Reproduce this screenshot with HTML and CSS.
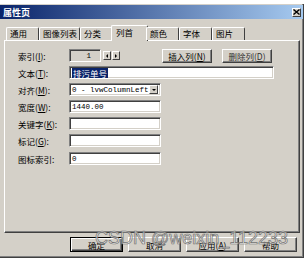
FILE: index.html
```html
<!DOCTYPE html>
<html lang="zh-CN">
<head>
	<meta charset="UTF-8">
	<title>属性页</title>
	<link rel="stylesheet" href="styles.css">
</head>
<body>
	<div class="win">
		<div class="caption">
			<span>属性页</span>
			<span class="close">
				<svg width="7" height="6" viewBox="0 0 7 6"><path d="M0.5 0.5l6 5M6.5 0.5l-6 5" stroke="#000" stroke-width="1.4"/></svg>
			</span>
		</div>
		<div class="tabs">
			<span class="tab">通用</span>
			<span class="tab">图像列表</span>
			<span class="tab">分类</span>
			<span class="tab on">列首</span>
			<span class="tab">颜色</span>
			<span class="tab">字体</span>
			<span class="tab">图片</span>
		</div>
		<div class="sheet">
			<div class="row">
				<span class="lbl">索引(<u>I</u>):</span>
				<span class="field field-idx">1</span>
				<span class="spin">
					<span class="spin-btn"><i class="arr-l"></i></span>
					<span class="spin-btn"><i class="arr-r"></i></span>
				</span>
				<span class="btn btn-insert">插入列(<u>N</u>)</span>
				<span class="btn btn-del">删除列(<u>D</u>)</span>
			</div>
			<div class="row">
				<span class="lbl">文本(<u>T</u>):</span>
				<span class="field field-wide"><span class="sel">排污单号</span></span>
			</div>
			<div class="row">
				<span class="lbl">对齐(<u>M</u>):</span>
				<span class="field combo">0 - lvwColumnLeft<span class="drop"><i class="arr-d"></i></span></span>
			</div>
			<div class="row">
				<span class="lbl">宽度(<u>W</u>):</span>
				<span class="field">1440.00</span>
			</div>
			<div class="row">
				<span class="lbl">关键字(<u>K</u>):</span>
				<span class="field"></span>
			</div>
			<div class="row">
				<span class="lbl">标记(<u>G</u>):</span>
				<span class="field"></span>
			</div>
			<div class="row row-last">
				<span class="lbl">图标索引:</span>
				<span class="field">0</span>
			</div>
		</div>
		<div class="actions">
			<span class="btn btn-def">确定</span>
			<span class="btn">取消</span>
			<span class="btn">应用(<u>A</u>)</span>
			<span class="btn">帮助</span>
		</div>
		<div class="mark">CSDN @weixin_112233</div>
	</div>
</body>
</html>
```

FILE: styles.css
```css
* {margin: 0;padding: 0;box-sizing: border-box;}
body {background: #fff;color: #000;font: 8.5px "Noto Sans CJK SC", sans-serif;}
u {text-decoration: underline;}

.win {position: relative;display: flex;flex-direction: column;width: 304px;height: 254px;margin-top: 4px;background: #d4d0c8;border-right: 1px solid #404040;border-bottom: 1px solid #404040;box-shadow: inset -1px -1px #808080;}

/* title bar */
.caption {display: flex;align-items: center;justify-content: space-between;height: 14px;margin-top: 1px;padding: 0 2px 0 3px;background: linear-gradient(to right, #0a246a, #a6caf0);color: #fff;font-weight: bold;font-size: 9px;}
.close {display: flex;align-items: center;justify-content: center;width: 9px;height: 9px;background: #d4d0c8;border: 1px solid;border-color: #fff #404040 #404040 #fff;}

/* tabs */
.tabs {position: relative;z-index: 1;display: flex;align-items: flex-end;height: 15px;margin-top: 6px;padding-left: 6px;}
.tab {height: 13px;min-width: 33px;padding: 0 2px 0 3px;border: 1px solid #fff;border-bottom: 0;border-right-color: #404040;border-radius: 2px 2px 0 0;line-height: 11px;background: #d4d0c8;}
.tab.on {height: 16px;min-width: 37px;margin: 0 -2px -1px;padding-left: 4px;line-height: 12px;}

/* sheet */
.sheet {height: 193px;margin: 0 3px 0 4px;padding: 6px 0 0 13px;border: 1px solid;border-color: #fff #404040 #404040 #fff;box-shadow: inset -1px -1px #808080;}
.row {display: flex;align-items: center;height: 17px;}
.row-last {margin-top: 1px;}
.lbl {width: 51px;white-space: nowrap;}

.field {display: flex;align-items: center;width: 92px;height: 13px;padding: 0 2px;background: #fff;border: 1px solid;border-color: #808080 #fff #fff #808080;box-shadow: inset 1px 1px #404040, inset -1px -1px #d4d0c8;font: 7.5px "Liberation Mono", monospace;white-space: nowrap;}
.field-idx {justify-content: flex-end;width: 32px;padding-right: 9px;background: #d4d0c8;}
.field-wide {width: 205px;}
.sel {padding: 0 1px;background: #0a246a;color: #fff;font: 8.5px/10px "Noto Sans CJK SC", sans-serif;}
.combo {justify-content: space-between;padding-right: 2px;}
.drop {display: flex;align-items: center;justify-content: center;width: 9px;height: 9px;background: #d4d0c8;border: 1px solid;border-color: #fff #404040 #404040 #fff;}

.spin {display: flex;gap: 1px;margin-left: 2px;}
.spin-btn {display: flex;align-items: center;justify-content: center;width: 8px;height: 9px;border: 1px solid;border-color: #fff #404040 #404040 #fff;}
.arr-l, .arr-r, .arr-d {width: 0;height: 0;border: 2px solid transparent;}
.arr-l {border-left: 0;border-right-color: #000;}
.arr-r {border-right: 0;border-left-color: #000;}
.arr-d {border-bottom: 0;border-top-color: #000;}

.btn {display: flex;align-items: center;justify-content: center;width: 50px;height: 14px;border: 1px solid;border-color: #fff #404040 #404040 #fff;box-shadow: inset -1px -1px #808080;white-space: nowrap;}
.btn-insert {margin-left: 42px;}
.btn-del {margin-left: 10px;color: #333;}

/* bottom buttons */
.actions {display: flex;justify-content: flex-end;gap: 5px;margin-top: 4px;padding-right: 6px;}
.actions .btn {width: 53px;height: 15px;}
.actions .btn-def {border-color: #000;box-shadow: inset 1px 1px #fff, inset -1px -1px #404040, inset -2px -2px #808080;}

.mark {position: absolute;left: 95px;top: 224px;font: 18px "Liberation Sans", sans-serif;color: rgba(255, 255, 255, .6);-webkit-text-stroke: .7px #707070;white-space: nowrap;}
```
